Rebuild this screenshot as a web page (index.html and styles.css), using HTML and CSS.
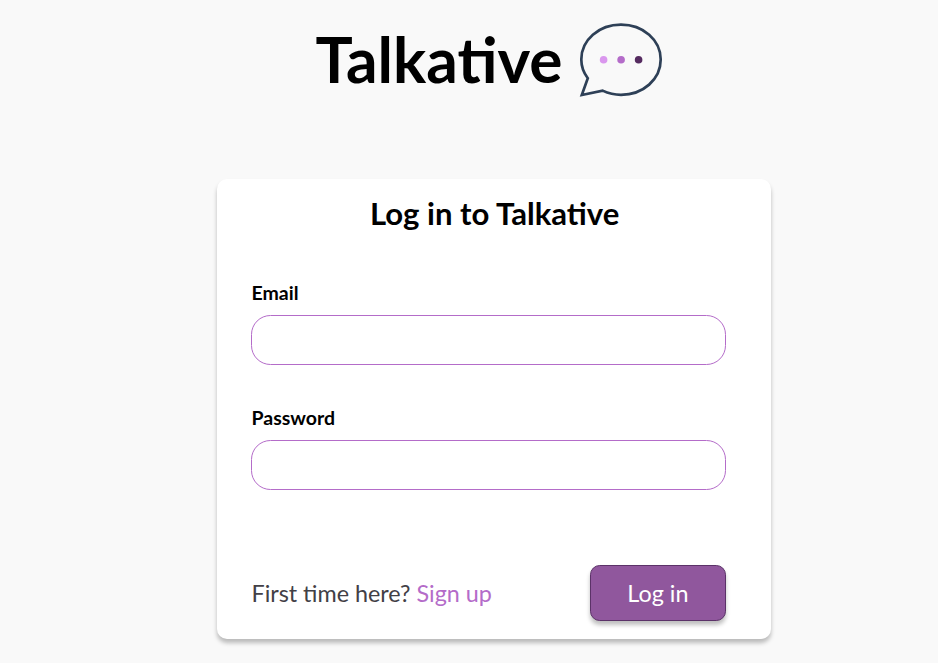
FILE: index.html
```html
<!DOCTYPE html>
<html lang="en">
<head>
<meta charset="utf-8">
<title>Talkative</title>
<link rel="stylesheet" href="styles.css">
</head>
<body>
<header class="brand">
<h1>Talkative</h1>
<svg class="logo" width="84" height="76" viewBox="0 0 84 76" aria-hidden="true">
<path d="M2.8 74 L8.8 57.2 C4.6 51.6 2.3 45.1 2.3 38.4 C2.3 19 19.9 3.7 42 3.7 C64.1 3.7 81.7 19 81.7 38.6 C81.7 58.4 64.1 73.8 42 73.8 C35.8 73.8 29.4 72.3 23.6 69.6 Z" fill="none" stroke="#2e4057" stroke-width="2.7" stroke-linejoin="miter"/>
<circle cx="24.6" cy="38.7" r="3.8" fill="#da97ee"/>
<circle cx="42.1" cy="38.7" r="3.8" fill="#b46cc9"/>
<circle cx="59.6" cy="38.7" r="3.8" fill="#552b60"/>
</svg>
</header>
<main class="card">
<h2>Log in to Talkative</h2>
<form>
<label for="email">Email</label>
<input id="email" type="email">
<label for="password">Password</label>
<input id="password" type="password">
<div class="actions">
<p>First time here? <a href="#">Sign up</a></p>
<button type="button">Log in</button>
</div>
</form>
</main>
</body>
</html>
```

FILE: styles.css
```css
* { box-sizing: border-box; }
body { margin: 0; height: 663px; overflow: hidden; background: #f9f9f9; color: #000; font-family: Lato, sans-serif; }
h1, h2, p { margin: 0; }
.brand { display: flex; height: 179px; padding: 21px 0 0 315.6px; }
h1 { width: 263.4px; font-size: 62.2px; line-height: 76px; font-weight: 700; }
.logo { display: block; flex: none; }
.card { width: 554px; height: 460px; margin-left: 217.4px; padding: 15px 45.5px 0 34.1px; background: #fff; border-radius: 10px; box-shadow: 0 4px 4px rgba(0,0,0,.25); }
h2 { margin-left: 118.5px; font-size: 31.1px; line-height: 38px; font-weight: 700; white-space: nowrap; }
form { padding-top: 49px; }
label { display: block; height: 24px; margin-bottom: 9.5px; font-size: 19.5px; line-height: 24px; font-weight: 700; }
input { display: block; width: 474.5px; height: 50px; margin-bottom: 41.5px; padding: 0 18px; border: 1px solid #b46cc9; border-radius: 19.5px; background: #fff; font: 19.5px Lato, sans-serif; }
.actions { display: flex; justify-content: space-between; padding-top: 33.5px; }
p { padding-top: 14px; color: #424046; font-size: 23.35px; line-height: 29px; }
a { color: #b46cc9; text-decoration: none; }
button { width: 136px; height: 56px; padding: 2px 0 0; border: 1px solid #5b3268; border-radius: 9.7px; background: #90579d; color: #fff; font: 23.35px/29px Lato, sans-serif; box-shadow: 0 4px 4px rgba(0,0,0,.25); }
```
